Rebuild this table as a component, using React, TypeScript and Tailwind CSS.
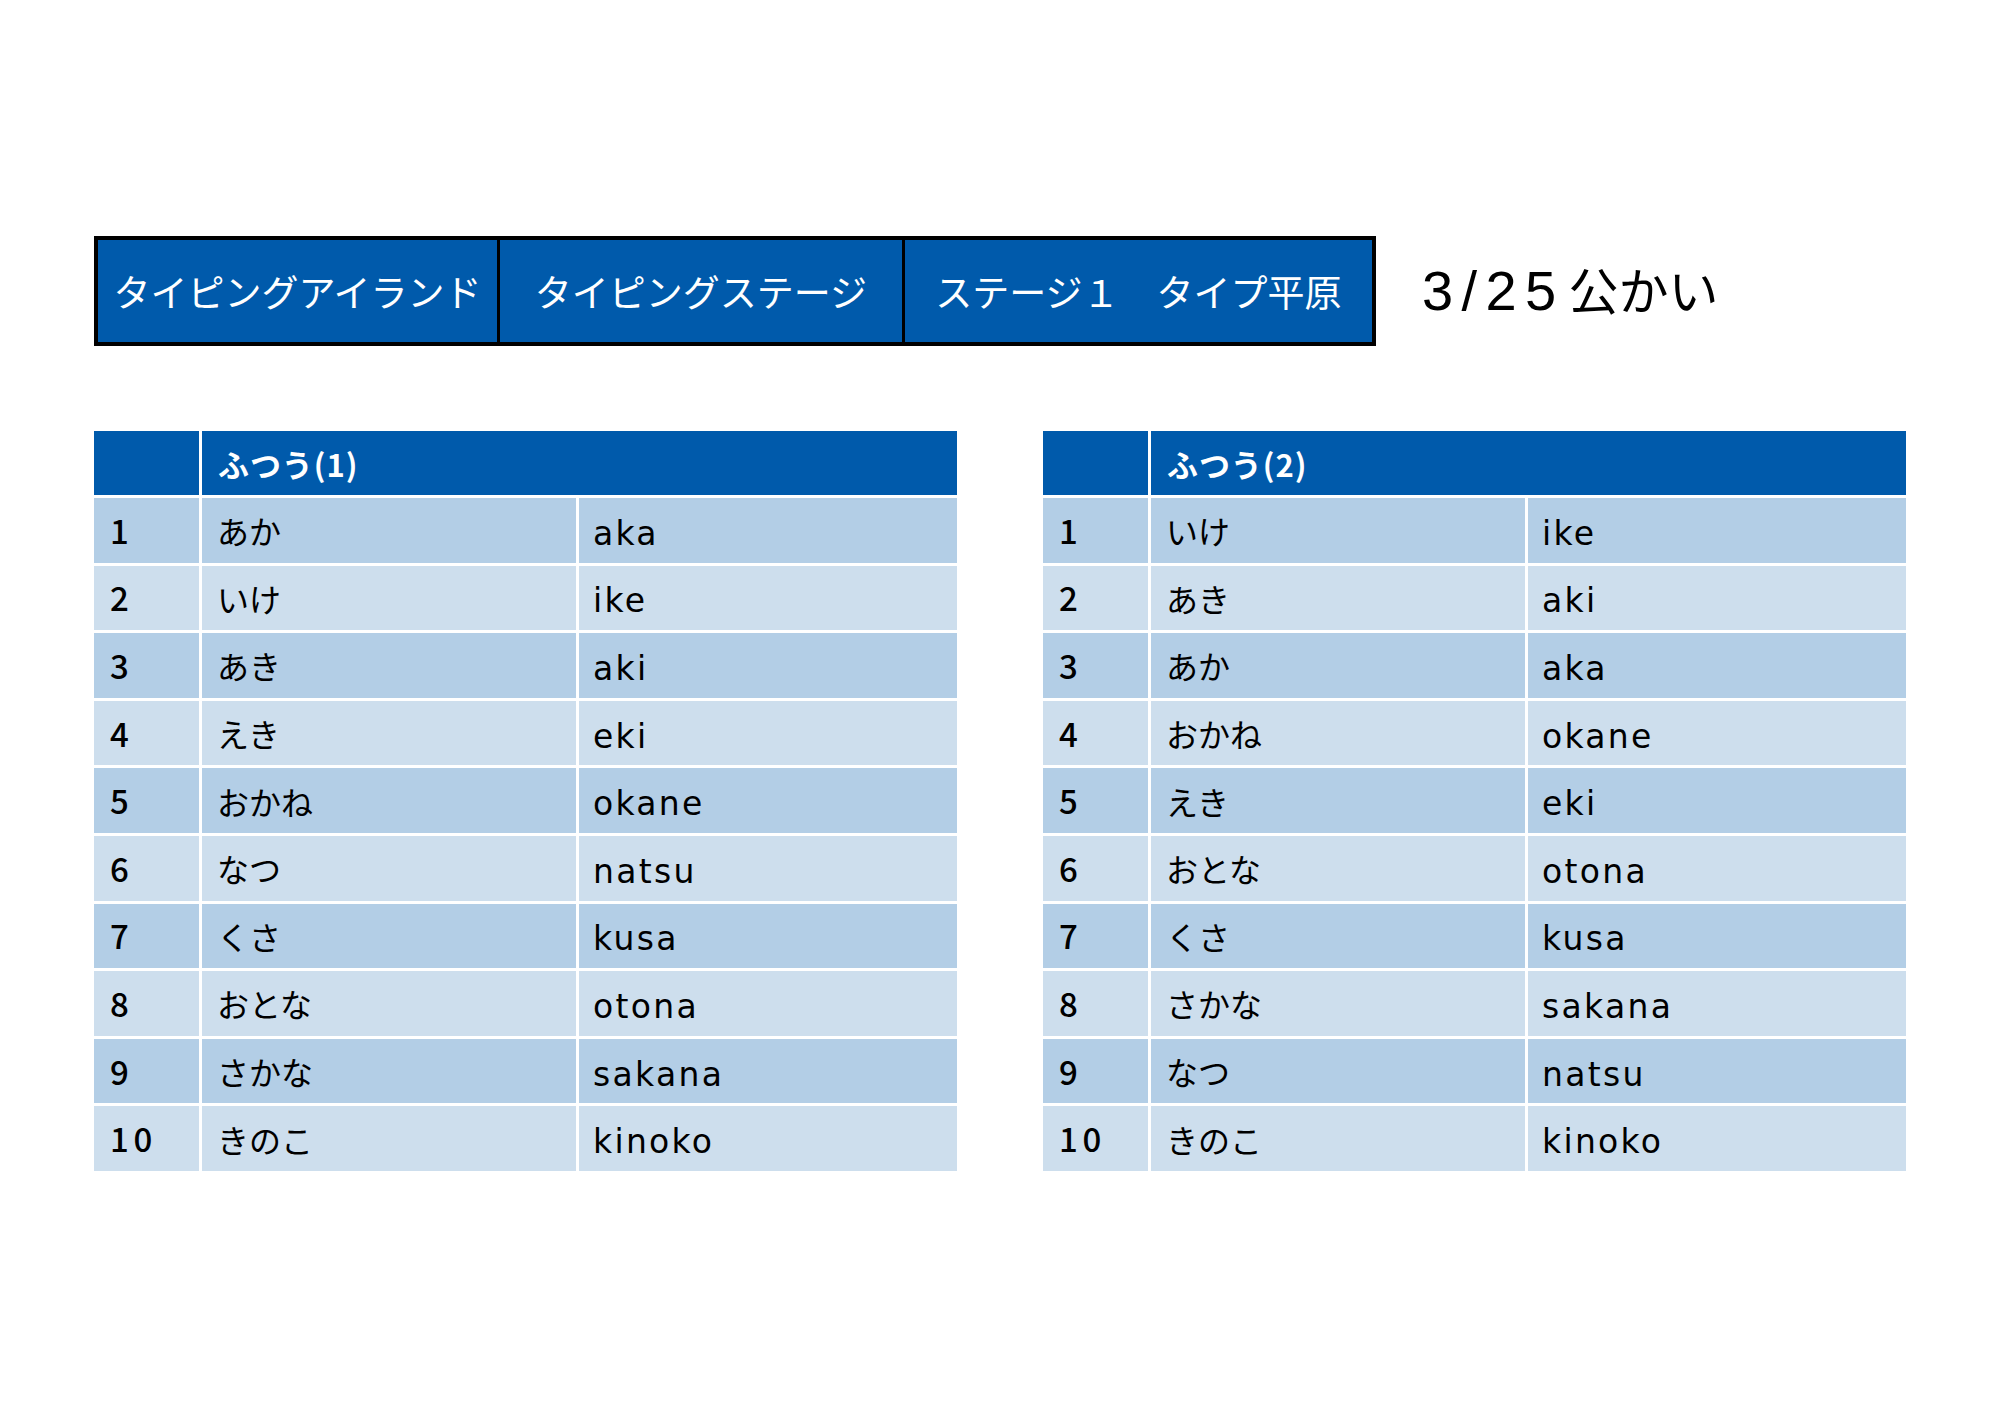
import React from "react";

const left = [
  ["1", "あか", "aka"],
  ["2", "いけ", "ike"],
  ["3", "あき", "aki"],
  ["4", "えき", "eki"],
  ["5", "おかね", "okane"],
  ["6", "なつ", "natsu"],
  ["7", "くさ", "kusa"],
  ["8", "おとな", "otona"],
  ["9", "さかな", "sakana"],
  ["10", "きのこ", "kinoko"],
];

const right = [
  ["1", "いけ", "ike"],
  ["2", "あき", "aki"],
  ["3", "あか", "aka"],
  ["4", "おかね", "okane"],
  ["5", "えき", "eki"],
  ["6", "おとな", "otona"],
  ["7", "くさ", "kusa"],
  ["8", "さかな", "sakana"],
  ["9", "なつ", "natsu"],
  ["10", "きのこ", "kinoko"],
];

const jp = { fontFamily: '"Noto Sans CJK JP", "Noto Sans", sans-serif' };
const lat = { fontFamily: '"DejaVu Sans", "Noto Sans CJK JP", sans-serif' };

function WordTable({ title, rows }: { title: string; rows: string[][] }) {
  return (
    <div className="w-[863px] grid grid-cols-[105px_374px_1fr] gap-[3px] bg-white">
      <div className="h-[64px] bg-[#005AAB]" />
      <div className="col-span-2 h-[64px] bg-[#005AAB] flex items-center pl-[16px] text-white font-bold text-[31px] leading-none tracking-[0.03em]" style={jp}>
        {title}
      </div>
      {rows.map((r, i) => {
        const bg = i % 2 === 0 ? "bg-[#B3CEE6]" : "bg-[#CDDEED]";
        return (
          <React.Fragment key={i}>
            <div className={`h-[64.6px] ${bg} flex items-center pl-[16px] text-[33px] font-medium text-black leading-none tracking-[0.14em]`} style={jp}>
              {r[0]}
            </div>
            <div className={`h-[64.6px] ${bg} flex items-center pl-[15px] text-[32px] text-black leading-none`} style={jp}>
              {r[1]}
            </div>
            <div className={`h-[64.6px] ${bg} flex items-center pl-[14px] pt-[6px] text-[33px] text-black leading-none tracking-[0.07em]`} style={lat}>
              {r[2]}
            </div>
          </React.Fragment>
        );
      })}
    </div>
  );
}

export default function App() {
  return (
    <div className="w-[2000px] h-[1414px] bg-white pt-[236px] pl-[94px]" style={jp}>
      <div className="flex items-center">
        <div className="flex w-[1282px] h-[110px] border-4 border-black bg-[#005AAB] text-white text-[37px] leading-none">
          <div className="w-[402px] border-r-[3px] border-black flex items-center justify-center">タイピングアイランド</div>
          <div className="w-[405px] border-r-[3px] border-black flex items-center justify-center">タイピングステージ</div>
          <div className="flex-1 flex items-center justify-center">ステージ１　タイプ平原</div>
        </div>
        <div className="ml-[46px] text-black text-[52px] leading-none flex items-baseline">
          <span className="tracking-[0.15em] text-[56px]" style={{ fontFamily: '"Liberation Sans", sans-serif' }}>3/25</span>
          <span className="ml-[4px] text-[50px]">公かい</span>
        </div>
      </div>
      <div className="flex gap-[86px] mt-[85px]">
        <WordTable title="ふつう(1)" rows={left} />
        <WordTable title="ふつう(2)" rows={right} />
      </div>
    </div>
  );
}
